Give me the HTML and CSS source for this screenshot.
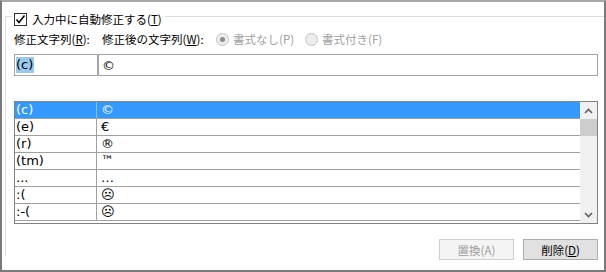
FILE: index.html
```html
<!DOCTYPE html>
<html lang="ja">
<head>
    <meta charset="UTF-8">
    <title>オートコレクト</title>
    <link rel="stylesheet" href="styles.css">
</head>
<body>

<div class="window">
    <div class="group">
        <div class="group-title">
            <span class="check">
                <svg width="11" height="11" viewBox="0 0 11 11"><polyline points="1.5,5.5 4,8.5 9.5,1.5" fill="none" stroke="#000" stroke-width="1.6"/></svg>
            </span>
            <span>入力中に自動修正する(<u>T</u>)</span>
        </div>

        <div class="labels">
            <span class="label-from">修正文字列(<u>R</u>):</span>
            <span class="label-to">修正後の文字列(<u>W</u>):</span>
            <span class="option"><span class="radio checked"></span>書式なし(P)</span>
            <span class="option"><span class="radio"></span>書式付き(F)</span>
        </div>

        <div class="inputs">
            <div class="field field-from"><span class="selection">(c)</span></div>
            <div class="field field-to">©</div>
        </div>

        <div class="list">
            <div class="rows">
                <div class="row selected"><span class="cell key">(c)</span><span class="cell val">©</span></div>
                <div class="row"><span class="cell key">(e)</span><span class="cell val">€</span></div>
                <div class="row"><span class="cell key">(r)</span><span class="cell val">®</span></div>
                <div class="row"><span class="cell key">(tm)</span><span class="cell val">™</span></div>
                <div class="row"><span class="cell key">...</span><span class="cell val">…</span></div>
                <div class="row"><span class="cell key">:(</span><span class="cell val">☹</span></div>
                <div class="row"><span class="cell key">:-(</span><span class="cell val">☹</span></div>
            </div>
            <div class="scrollbar">
                <div class="arrow">
                    <svg width="9" height="6" viewBox="0 0 9 6"><polyline points="1,5 4.5,1.5 8,5" fill="none" stroke="#606060" stroke-width="1.6"/></svg>
                </div>
                <div class="thumb"></div>
                <div class="track"></div>
                <div class="arrow">
                    <svg width="9" height="6" viewBox="0 0 9 6"><polyline points="1,1 4.5,4.5 8,1" fill="none" stroke="#606060" stroke-width="1.6"/></svg>
                </div>
            </div>
        </div>

        <div class="buttons">
            <button class="btn" disabled>置換(A)</button>
            <button class="btn">削除(<u>D</u>)</button>
        </div>
    </div>
</div>

</body>
</html>
```

FILE: styles.css
```css
* {
    box-sizing: border-box;
}
body {
    margin: 0;
    background-color: white;
    font-family: "Noto Sans CJK JP", sans-serif;
    font-size: 11.5px;
    color: #000;
}
u {
    text-decoration-thickness: 1px;
    text-underline-offset: 1px;
}
.window {
    width: 606px;
    height: 272px;
    border: 2px solid #7a7a7a;
    border-top-color: #a8a8a8;
    padding-left: 3px;
}
.group {
    margin-top: 14px;
    border-top: 1px solid #dcdcdc;
    border-left: 1px solid #dcdcdc;
    padding: 0 6px 0 8px;
    height: 240px;
}
.group-title {
    display: flex;
    align-items: center;
    gap: 5px;
    width: fit-content;
    margin: -4px 0 0 -2px;
    padding: 0 3px 0 2px;
    background-color: white;
    height: 13px;
    line-height: 13px;
}
.check {
    width: 13px;
    height: 13px;
    border: 1px solid #333;
    display: flex;
    align-items: center;
    justify-content: center;
}
.check svg {
    display: block;
}
.labels {
    display: flex;
    align-items: center;
    margin-top: 5px;
    height: 16px;
    line-height: 16px;
}
.label-from {
    width: 88px;
}
.label-to {
    width: 114px;
}
.option {
    display: flex;
    align-items: center;
    gap: 4px;
    width: 89px;
    color: #a0a0a0;
}
.radio {
    width: 13px;
    height: 13px;
    border-radius: 50%;
    border: 1px solid #c4c4c4;
    background-color: #ececec;
    display: flex;
    align-items: center;
    justify-content: center;
}
.radio.checked::after {
    content: "";
    width: 5px;
    height: 5px;
    border-radius: 50%;
    background-color: #8c8c8c;
}
.inputs {
    display: flex;
    margin-top: 7px;
    height: 22px;
    font-family: "DejaVu Sans", sans-serif;
    font-size: 13px;
}
.field {
    border: 1px solid #a5a5a5;
    display: flex;
    align-items: center;
    background-color: white;
}
.field-from {
    width: 84px;
    padding-left: 1px;
}
.field-to {
    flex: 1;
    padding-left: 3px;
}
.selection {
    background-color: #99c9ef;
    line-height: 16px;
    padding-right: 1px;
}
.list {
    display: flex;
    margin-top: 25px;
    height: 123px;
    border: 1px solid #828282;
    font-family: "DejaVu Sans", sans-serif;
    font-size: 13px;
    overflow: hidden;
}
.rows {
    flex: 1;
}
.row {
    display: flex;
    height: 17px;
    line-height: 16px;
    border-bottom: 1px solid #a0a0a0;
}
.row.selected {
    background-color: #3399ff;
    color: white;
}
.cell {
    white-space: nowrap;
}
.key {
    width: 82px;
    padding-left: 1px;
    border-right: 1px solid #a0a0a0;
}
.row.selected .key {
    border-right-color: #8cbff2;
}
.val {
    padding-left: 4px;
}
.scrollbar {
    width: 17px;
    background-color: #f0f0f0;
    display: flex;
    flex-direction: column;
}
.arrow {
    height: 17px;
    display: flex;
    align-items: center;
    justify-content: center;
}
.thumb {
    height: 17px;
    background-color: #cdcdcd;
}
.track {
    flex: 1;
}
.buttons {
    display: flex;
    justify-content: flex-end;
    gap: 9px;
    margin-top: 15px;
}
.btn {
    width: 75px;
    height: 21px;
    padding: 0;
    font-family: "Noto Sans CJK JP", sans-serif;
    font-size: 11.5px;
    color: #000;
    background-color: #e1e1e1;
    border: 1px solid #adadad;
}
.btn:disabled {
    background-color: #f4f4f4;
    border-color: #cfcfcf;
    color: #a0a0a0;
}
```
